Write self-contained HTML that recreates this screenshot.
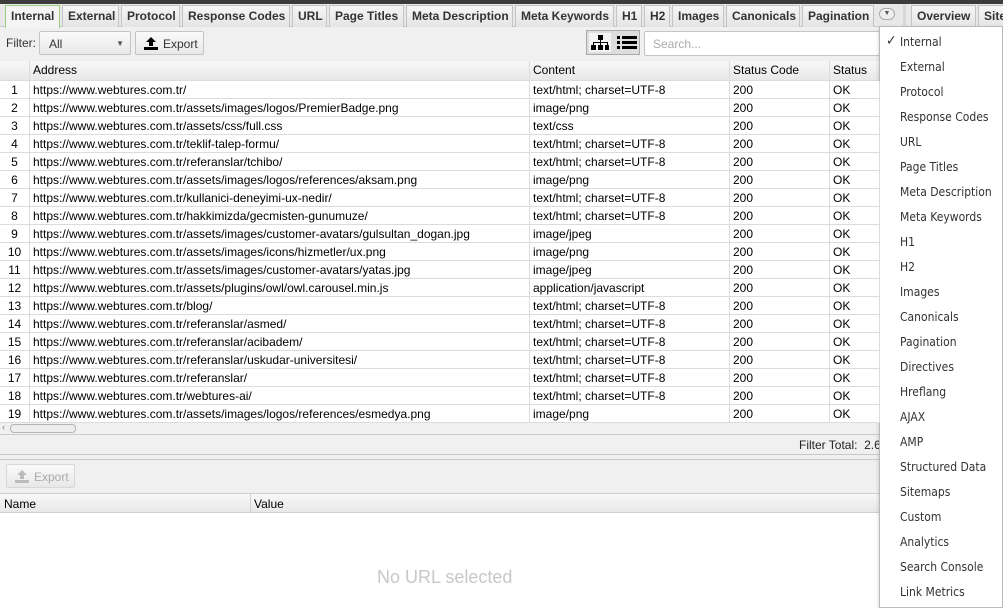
<!DOCTYPE html><html><head><style>
*{margin:0;padding:0;box-sizing:border-box}
body{width:1003px;height:608px;overflow:hidden;background:#f0f0f0;font-family:"Liberation Sans",Arial,sans-serif;font-size:12px;color:#000;position:relative}
.topbar{position:absolute;left:0;top:0;width:1003px;height:4px;background:#3c3c3c}
.tabs{position:absolute;top:4px;left:0;height:23px;width:1003px;background:#e8e8e8;border-bottom:1px solid #c8c8c8}
.tab{position:absolute;top:1px;height:22px;border:1px solid #c4c4c4;border-bottom:none;background:linear-gradient(#f6f6f6,#e4e4e4);font-weight:bold;font-size:12px;color:#333;padding:3px 5px 0 5px;white-space:nowrap}
.tab.act{background:#f4f4f4;border-color:#9ccf7e;height:23px}
.tb{position:absolute;top:28px;left:0;width:880px;height:31px;background:#f0f0f0}
.btn{position:absolute;border:1px solid #c4c4c4;border-radius:2px;background:linear-gradient(#fafafa,#e8e8e8);font-size:12px;color:#333}
.grid{position:absolute;left:0;top:61px;width:880px}
.row{position:absolute;left:0;width:880px;height:18px;background:#fff;border-bottom:1px solid #dcdcdc;white-space:nowrap}
.row div{position:absolute;top:0;height:18px;padding:2px 0 0 3px;border-right:1px solid #dcdcdc;overflow:hidden}
.hdr{background:linear-gradient(#f8f8f8,#e8e8e8);height:20px}
.c0{left:0;width:30px;text-align:center;padding-left:0!important}
.c1{left:30px;width:500px}.c2{left:530px;width:200px}.c3{left:730px;width:100px}.c4{left:830px;width:50px}
.menu{position:absolute;left:879px;top:26px;width:124px;height:582px;background:#fff;border:1px solid #bbb;box-shadow:0 2px 4px rgba(0,0,0,.2);font-family:"DejaVu Sans Condensed","Liberation Sans",sans-serif;font-size:12px;color:#333}
.menu div{position:absolute;left:20px;}
</style></head><body>
<div class="topbar"></div>
<div class="tabs">
<div class="tab act" style="left:5px;width:55px">Internal</div>
<div class="tab" style="left:62px;width:57px">External</div>
<div class="tab" style="left:121px;width:59px">Protocol</div>
<div class="tab" style="left:182px;width:108px">Response Codes</div>
<div class="tab" style="left:292px;width:35px">URL</div>
<div class="tab" style="left:329px;width:75px">Page Titles</div>
<div class="tab" style="left:406px;width:107px">Meta Description</div>
<div class="tab" style="left:515px;width:99px">Meta Keywords</div>
<div class="tab" style="left:616px;width:26px">H1</div>
<div class="tab" style="left:644px;width:26px">H2</div>
<div class="tab" style="left:672px;width:52px">Images</div>
<div class="tab" style="left:726px;width:74px">Canonicals</div>
<div class="tab" style="left:802px;width:72px">Pagination</div>
<div style="position:absolute;left:879px;top:4px;width:16px;height:12px;border:1px solid #aaa;border-radius:6px;background:#eee;font-size:7px;text-align:center;line-height:10px;color:#555">▼</div>
<div style="position:absolute;left:903px;top:0;width:3px;height:23px;background:#d8d8d8"></div>
<div class="tab" style="left:911px;width:65px">Overview</div>
<div class="tab" style="left:978px;width:40px">Site</div>
</div>
<div class="tb">
<span style="position:absolute;left:6px;top:8px;color:#333">Filter:</span>
<div class="btn" style="left:39px;top:3px;width:92px;height:24px;padding:5px 0 0 9px">All<span style="position:absolute;right:6px;top:7px;font-size:8px;color:#555">▼</span></div>
<div class="btn" style="left:135px;top:3px;width:69px;height:24px;padding:5px 0 0 27px"><svg style="position:absolute;left:8px;top:5px" width="14" height="13"><path d="M7 0L12 5H9V9H5V5H2Z" fill="#000"/><rect x="0" y="10" width="14" height="3" fill="#000"/></svg>Export</div>
<div style="position:absolute;left:586px;top:2px;width:54px;height:25px;border:1px solid #aaa;background:#ddd">
<div style="position:absolute;left:2px;top:2px;width:22px;height:19px;background:#f4f4f4"></div>
<svg style="position:absolute;left:4px;top:4px" width="18" height="16"><rect x="7" y="0" width="5" height="5"/><rect x="9" y="5" width="1" height="3"/><rect x="2" y="7" width="15" height="1"/><rect x="2" y="7" width="1" height="3"/><rect x="9" y="7" width="1" height="3"/><rect x="16" y="7" width="1" height="3"/><rect x="0" y="10" width="5" height="5"/><rect x="7" y="10" width="5" height="5"/><rect x="14" y="10" width="4" height="5"/></svg>
<svg style="position:absolute;left:30px;top:4px" width="20" height="16"><rect x="0" y="1" width="3" height="3"/><rect x="5" y="1" width="15" height="3"/><rect x="0" y="6" width="3" height="3"/><rect x="5" y="6" width="15" height="3"/><rect x="0" y="11" width="3" height="3"/><rect x="5" y="11" width="15" height="3"/></svg>
</div>
<div style="position:absolute;left:644px;top:3px;width:236px;height:25px;border:1px solid #c4c4c4;border-radius:2px;background:#fff;color:#aaa;padding:5px 0 0 8px">Search...</div>
</div>
<div class="grid">
<div class="row hdr" style="top:0"><div class="c0"></div><div class="c1">Address</div><div class="c2">Content</div><div class="c3">Status Code</div><div class="c4">Status</div></div>
</div>
<div style="position:absolute;left:0;top:423px;width:880px;height:12px;background:#f0f0f0;border-bottom:1px solid #ccc"><span style="position:absolute;left:2px;top:-1px;font-size:9px;color:#777">‹</span><div style="position:absolute;left:10px;top:1px;width:66px;height:9px;border:1px solid #b4b4b4;border-radius:4px;background:#eee"></div></div>
<div style="position:absolute;left:799px;top:438px;color:#222">Filter Total:&nbsp; 2.6</div>
<div style="position:absolute;left:0;top:454px;width:880px;height:1px;background:#c8c8c8"></div>
<div style="position:absolute;left:0;top:459px;width:880px;height:1px;background:#c8c8c8"></div>
<div class="btn" style="left:6px;top:464px;width:69px;height:24px;padding:5px 0 0 27px;color:#aaa;border-color:#d8d8d8"><svg style="position:absolute;left:8px;top:5px" width="14" height="13"><path d="M7 0L12 5H9V9H5V5H2Z" fill="#bbb"/><rect x="0" y="10" width="14" height="3" fill="#bbb"/></svg>Export</div>
<div style="position:absolute;left:0;top:493px;width:880px;height:20px;background:linear-gradient(#f8f8f8,#e8e8e8);border-top:1px solid #d0d0d0;border-bottom:1px solid #d0d0d0">
<span style="position:absolute;left:4px;top:3px">Name</span><div style="position:absolute;left:250px;top:0;width:1px;height:19px;background:#d0d0d0"></div><span style="position:absolute;left:254px;top:3px">Value</span></div>
<div style="position:absolute;left:0;top:513px;width:880px;height:95px;background:#fff"><span style="position:absolute;left:377px;top:54px;font-size:18px;color:#c8c8c8">No URL selected</span></div>
<div class="menu">
<span style="position:absolute;left:6px;top:6px;font-size:14px;font-weight:bold">✓</span>
<div style="top:8px">Internal</div><div style="top:33px">External</div><div style="top:58px">Protocol</div><div style="top:83px">Response Codes</div><div style="top:108px">URL</div><div style="top:133px">Page Titles</div><div style="top:158px">Meta Description</div><div style="top:183px">Meta Keywords</div><div style="top:208px">H1</div><div style="top:233px">H2</div><div style="top:258px">Images</div><div style="top:283px">Canonicals</div><div style="top:308px">Pagination</div><div style="top:333px">Directives</div><div style="top:358px">Hreflang</div><div style="top:383px">AJAX</div><div style="top:408px">AMP</div><div style="top:433px">Structured Data</div><div style="top:458px">Sitemaps</div><div style="top:483px">Custom</div><div style="top:508px">Analytics</div><div style="top:533px">Search Console</div><div style="top:558px">Link Metrics</div>
</div>
<div style="position:absolute;left:0;top:81px">
<div class="row" style="top:0"><div class="c0">1</div><div class="c1">https://www.webtures.com.tr/</div><div class="c2">text/html; charset=UTF-8</div><div class="c3">200</div><div class="c4">OK</div></div>
<div class="row" style="top:18px"><div class="c0">2</div><div class="c1">https://www.webtures.com.tr/assets/images/logos/PremierBadge.png</div><div class="c2">image/png</div><div class="c3">200</div><div class="c4">OK</div></div>
<div class="row" style="top:36px"><div class="c0">3</div><div class="c1">https://www.webtures.com.tr/assets/css/full.css</div><div class="c2">text/css</div><div class="c3">200</div><div class="c4">OK</div></div>
<div class="row" style="top:54px"><div class="c0">4</div><div class="c1">https://www.webtures.com.tr/teklif-talep-formu/</div><div class="c2">text/html; charset=UTF-8</div><div class="c3">200</div><div class="c4">OK</div></div>
<div class="row" style="top:72px"><div class="c0">5</div><div class="c1">https://www.webtures.com.tr/referanslar/tchibo/</div><div class="c2">text/html; charset=UTF-8</div><div class="c3">200</div><div class="c4">OK</div></div>
<div class="row" style="top:90px"><div class="c0">6</div><div class="c1">https://www.webtures.com.tr/assets/images/logos/references/aksam.png</div><div class="c2">image/png</div><div class="c3">200</div><div class="c4">OK</div></div>
<div class="row" style="top:108px"><div class="c0">7</div><div class="c1">https://www.webtures.com.tr/kullanici-deneyimi-ux-nedir/</div><div class="c2">text/html; charset=UTF-8</div><div class="c3">200</div><div class="c4">OK</div></div>
<div class="row" style="top:126px"><div class="c0">8</div><div class="c1">https://www.webtures.com.tr/hakkimizda/gecmisten-gunumuze/</div><div class="c2">text/html; charset=UTF-8</div><div class="c3">200</div><div class="c4">OK</div></div>
<div class="row" style="top:144px"><div class="c0">9</div><div class="c1">https://www.webtures.com.tr/assets/images/customer-avatars/gulsultan_dogan.jpg</div><div class="c2">image/jpeg</div><div class="c3">200</div><div class="c4">OK</div></div>
<div class="row" style="top:162px"><div class="c0">10</div><div class="c1">https://www.webtures.com.tr/assets/images/icons/hizmetler/ux.png</div><div class="c2">image/png</div><div class="c3">200</div><div class="c4">OK</div></div>
<div class="row" style="top:180px"><div class="c0">11</div><div class="c1">https://www.webtures.com.tr/assets/images/customer-avatars/yatas.jpg</div><div class="c2">image/jpeg</div><div class="c3">200</div><div class="c4">OK</div></div>
<div class="row" style="top:198px"><div class="c0">12</div><div class="c1">https://www.webtures.com.tr/assets/plugins/owl/owl.carousel.min.js</div><div class="c2">application/javascript</div><div class="c3">200</div><div class="c4">OK</div></div>
<div class="row" style="top:216px"><div class="c0">13</div><div class="c1">https://www.webtures.com.tr/blog/</div><div class="c2">text/html; charset=UTF-8</div><div class="c3">200</div><div class="c4">OK</div></div>
<div class="row" style="top:234px"><div class="c0">14</div><div class="c1">https://www.webtures.com.tr/referanslar/asmed/</div><div class="c2">text/html; charset=UTF-8</div><div class="c3">200</div><div class="c4">OK</div></div>
<div class="row" style="top:252px"><div class="c0">15</div><div class="c1">https://www.webtures.com.tr/referanslar/acibadem/</div><div class="c2">text/html; charset=UTF-8</div><div class="c3">200</div><div class="c4">OK</div></div>
<div class="row" style="top:270px"><div class="c0">16</div><div class="c1">https://www.webtures.com.tr/referanslar/uskudar-universitesi/</div><div class="c2">text/html; charset=UTF-8</div><div class="c3">200</div><div class="c4">OK</div></div>
<div class="row" style="top:288px"><div class="c0">17</div><div class="c1">https://www.webtures.com.tr/referanslar/</div><div class="c2">text/html; charset=UTF-8</div><div class="c3">200</div><div class="c4">OK</div></div>
<div class="row" style="top:306px"><div class="c0">18</div><div class="c1">https://www.webtures.com.tr/webtures-ai/</div><div class="c2">text/html; charset=UTF-8</div><div class="c3">200</div><div class="c4">OK</div></div>
<div class="row" style="top:324px"><div class="c0">19</div><div class="c1">https://www.webtures.com.tr/assets/images/logos/references/esmedya.png</div><div class="c2">image/png</div><div class="c3">200</div><div class="c4">OK</div></div>
</div>
</body></html>
